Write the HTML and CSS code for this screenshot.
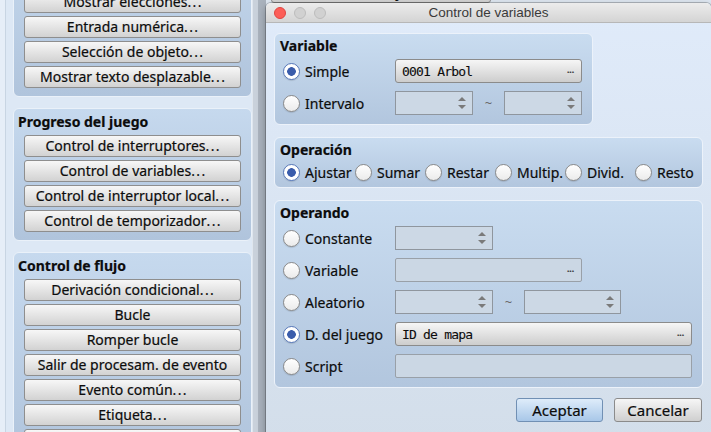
FILE: index.html
```html
<!DOCTYPE html>
<html lang="es">
<head>
<meta charset="utf-8">
<title>Control de variables</title>
<link rel="stylesheet" href="styles.css">
</head>
<body>
<div class="desk">
  <div class="cmdcol">
    <section class="grp">
      <div class="grp-title">Mensaje</div>
      <div class="btns">
        <div class="cbtn">Mostrar texto<span class="ell">...</span></div>
        <div class="cbtn">Mostrar elecciones<span class="ell">...</span></div>
        <div class="cbtn">Entrada numérica<span class="ell">...</span></div>
        <div class="cbtn">Selección de objeto<span class="ell">...</span></div>
        <div class="cbtn">Mostrar texto desplazable<span class="ell">...</span></div>
      </div>
    </section>
    <section class="grp">
      <div class="grp-title">Progreso del juego</div>
      <div class="btns">
        <div class="cbtn">Control de interruptores<span class="ell">...</span></div>
        <div class="cbtn">Control de variables<span class="ell">...</span></div>
        <div class="cbtn">Control de interruptor local<span class="ell">...</span></div>
        <div class="cbtn">Control de temporizador<span class="ell">...</span></div>
      </div>
    </section>
    <section class="grp">
      <div class="grp-title">Control de flujo</div>
      <div class="btns">
        <div class="cbtn">Derivación condicional<span class="ell">...</span></div>
        <div class="cbtn">Bucle</div>
        <div class="cbtn">Romper bucle</div>
        <div class="cbtn">Salir de procesam. de evento</div>
        <div class="cbtn">Evento común<span class="ell">...</span></div>
        <div class="cbtn">Etiqueta<span class="ell">...</span></div>
        <div class="cbtn">Saltar a etiqueta<span class="ell">...</span></div>
      </div>
    </section>
  </div>
  <div class="splitter"></div>
  <div class="cmdcol2">
    <div class="cbtn bgbtn">Cambiar objetos<span class="ell">...</span></div>
  </div>
</div>

<div class="dialog">
  <div class="titlebar">
    <div class="lights"><span class="light red"></span><span class="light"></span><span class="light"></span></div>
    <div class="title">Control de variables</div>
  </div>
  <div class="dbody">
    <section class="box box-var">
      <div class="box-title">Variable</div>
      <div class="row">
        <div class="opt"><span class="radio on"></span><span>Simple</span></div>
        <div class="sel w187"><span class="mono">0001 Arbol</span><span class="dots">...</span></div>
      </div>
      <div class="row">
        <div class="opt"><span class="radio"></span><span>Intervalo</span></div>
        <div class="spin w78"></div>
        <span class="tilde">~</span>
        <div class="spin w78"></div>
      </div>
    </section>

    <section class="box box-op">
      <div class="box-title">Operación</div>
      <div class="ops">
        <div class="op"><span class="radio on"></span><span>Ajustar</span></div>
        <div class="op"><span class="radio"></span><span>Sumar</span></div>
        <div class="op"><span class="radio"></span><span>Restar</span></div>
        <div class="op"><span class="radio"></span><span>Multip.</span></div>
        <div class="op"><span class="radio"></span><span>Divid.</span></div>
        <div class="op"><span class="radio"></span><span>Resto</span></div>
      </div>
    </section>

    <section class="box box-opd">
      <div class="box-title">Operando</div>
      <div class="row">
        <div class="opt"><span class="radio"></span><span>Constante</span></div>
        <div class="spin w98"></div>
      </div>
      <div class="row">
        <div class="opt"><span class="radio"></span><span>Variable</span></div>
        <div class="field w187"><span class="dots">...</span></div>
      </div>
      <div class="row">
        <div class="opt"><span class="radio"></span><span>Aleatorio</span></div>
        <div class="spin w98"></div>
        <span class="tilde">~</span>
        <div class="spin w97"></div>
      </div>
      <div class="row">
        <div class="opt"><span class="radio on"></span><span>D. del juego</span></div>
        <div class="sel w297"><span class="mono">ID de mapa</span><span class="dots">...</span></div>
      </div>
      <div class="row">
        <div class="opt"><span class="radio"></span><span>Script</span></div>
        <div class="field w297"></div>
      </div>
    </section>

    <div class="actions">
      <div class="dbtn primary">Aceptar</div>
      <div class="dbtn">Cancelar</div>
    </div>
  </div>
</div>
</body>
</html>
```
FILE: styles.css
```css
html, body {
  margin: 0;
  padding: 0;
}
body {
  width: 711px;
  height: 432px;
  overflow: hidden;
  position: relative;
  font-family: "Noto Sans", "DejaVu Sans", sans-serif;
  font-size: 14px;
  color: #0c0c0c;
  -webkit-text-stroke: 0.2px currentColor;
  background: #dde8f5;
}

/* ---------- background window ---------- */
.desk {
  display: flex;
  height: 432px;
  background: linear-gradient(to right, #e6eef8 0 5px, #c8d5e3 5px 6px, #dde8f5 6px);
}
.cmdcol {
  flex: none;
  width: 239px;
  padding-left: 13px;
  margin-top: -61px;
  display: flex;
  flex-direction: column;
  gap: 11px;
}
.grp {
  border: 1px solid #eaf1f9;
  border-radius: 6px;
  background: linear-gradient(#c6d9ee, #b0c4dc);
  padding: 0 10px 8px;
}
.grp-title {
  height: 26px;
  box-sizing: border-box;
  padding-top: 4px;
  margin-left: -6px;
  line-height: 18px;
  font-weight: bold;
}
.btns {
  display: flex;
  flex-direction: column;
  gap: 3px;
}
.cbtn {
  height: 22px;
  box-sizing: border-box;
  border: 1px solid #8e8e8e;
  border-radius: 3px;
  background: linear-gradient(#f7f7f7, #d2d2d2);
  text-align: center;
  line-height: 20px;
  white-space: nowrap;
}
.ell {
  letter-spacing: 1.4px;
  margin-right: -1.4px;
}
.splitter {
  flex: none;
  width: 14px;
  background: linear-gradient(to right, #dfe6ee 0 1px, #c9d1db 1px 6px, #aab3be 6px);
}
.cmdcol2 {
  flex: 1;
  padding-left: 5px;
  background: #dfe8f2;
}
.bgbtn {
  width: 220px;
  margin-top: -19px;
}

/* ---------- dialog ---------- */
.dialog {
  position: absolute;
  left: 266px;
  top: 3px;
  width: 445px;
  height: 440px;
  border-radius: 5px 5px 0 0;
  background: linear-gradient(#e0ebfa, #d3deea);
  box-shadow: 0 0 0 1px rgba(0, 0, 0, 0.22), 0 3px 10px rgba(0, 0, 0, 0.3);
  overflow: hidden;
}
.titlebar {
  height: 20px;
  box-sizing: border-box;
  border-bottom: 1px solid #b7b7b7;
  background: linear-gradient(#ececec, #d4d4d4);
  position: relative;
  display: flex;
  align-items: center;
}
.lights {
  display: flex;
  gap: 8px;
  padding-left: 8px;
  position: relative;
  z-index: 1;
}
.light {
  width: 12px;
  height: 12px;
  box-sizing: border-box;
  border-radius: 50%;
  background: #d1d1d1;
  border: 1px solid #bcbcbc;
}
.light.red {
  background: #fc5e57;
  border-color: #df4540;
}
.title {
  position: absolute;
  left: 0;
  right: 0;
  top: 0;
  line-height: 19px;
  text-align: center;
  font-family: "Liberation Sans", Arial, sans-serif;
  font-size: 13.5px;
  color: #3a3a3a;
  -webkit-text-stroke: 0;
}
.dbody {
  padding: 10px 8px 0;
  display: flex;
  flex-direction: column;
  align-items: flex-start;
  gap: 12px;
}
.box {
  box-sizing: border-box;
  border: 1px solid #ecf2fa;
  border-radius: 6px;
  background: linear-gradient(#c9dcf0, #b2c6de);
  padding: 3px 0 9px;
}
.box-var { width: 319px; }
.box-op { width: 429px; padding-bottom: 3px; }
.box-opd { width: 429px; }
.box-title {
  line-height: 18px;
  padding-left: 5px;
  font-weight: bold;
}
.row {
  display: flex;
  align-items: center;
  height: 24px;
  margin-top: 8px;
}
.box-title + .row { margin-top: 4px; }
.opt {
  flex: none;
  width: 120px;
  box-sizing: border-box;
  padding-left: 8px;
  display: flex;
  align-items: center;
  gap: 5px;
  white-space: nowrap;
}
.radio {
  flex: none;
  width: 17px;
  height: 17px;
  box-sizing: border-box;
  border-radius: 50%;
  border: 1px solid #8a8a8a;
  background: linear-gradient(#ffffff, #ebebeb);
  box-shadow: 0 1px 1px rgba(0, 0, 0, 0.12);
}
.radio.on {
  border-color: #5878b8;
  background: radial-gradient(circle, #3a5cab 0 4px, #ffffff 4.6px);
}
.ops {
  display: grid;
  grid-template-columns: 72px repeat(5, 70px);
  padding-left: 8px;
  margin-top: 1px;
  height: 24px;
}
.op {
  display: flex;
  align-items: center;
  gap: 5px;
  white-space: nowrap;
}
.sel {
  box-sizing: border-box;
  height: 24px;
  border: 1px solid #8b8b8b;
  border-radius: 3px;
  background: linear-gradient(#f6f6f6, #cdcdcd);
  display: flex;
  align-items: center;
  justify-content: space-between;
  padding: 0 7px 0 6px;
}
.mono {
  font-family: "DejaVu Sans Mono", "Liberation Mono", monospace;
  font-size: 13px;
  letter-spacing: -0.8px;
  -webkit-text-stroke: 0.1px currentColor;
}
.dots {
  font-size: 11px;
  letter-spacing: -0.5px;
  color: #333;
  line-height: 1;
  margin-top: -5px;
}
.field {
  box-sizing: border-box;
  height: 24px;
  border: 1px solid #99a0a8;
  border-radius: 2px;
  background: #cbd7e4;
  display: flex;
  align-items: center;
  justify-content: flex-end;
  padding-right: 7px;
}
.spin {
  box-sizing: border-box;
  height: 24px;
  border: 1px solid #8f969e;
  background: #ccd8e5;
  position: relative;
}
.spin::before,
.spin::after {
  content: "";
  position: absolute;
  right: 6px;
  width: 0;
  height: 0;
  border-left: 4px solid transparent;
  border-right: 4px solid transparent;
}
.spin::before {
  top: 5px;
  border-bottom: 4px solid #7a7a7a;
}
.spin::after {
  bottom: 5px;
  border-top: 4px solid #7a7a7a;
}
.w78 { width: 78px; }
.w97 { width: 97px; }
.w98 { width: 98px; }
.w187 { width: 187px; }
.w297 { width: 297px; }
.tilde {
  flex: none;
  width: 31px;
  text-align: center;
  color: #666;
  font-size: 13px;
  -webkit-text-stroke: 0;
}
.actions {
  align-self: stretch;
  display: flex;
  justify-content: flex-end;
  gap: 11px;
  margin-top: -2px;
  padding-right: 1px;
}
.dbtn {
  width: 88px;
  height: 24px;
  box-sizing: border-box;
  border: 1px solid #8b8b8b;
  border-radius: 3px;
  background: linear-gradient(#f6f6f6, #cfcfcf);
  text-align: center;
  line-height: 22px;
  font-size: 15px;
}
.dbtn.primary {
  width: 87px;
  border-color: #7190b4;
  background: linear-gradient(#deecfa, #a8c7e8);
}
```
